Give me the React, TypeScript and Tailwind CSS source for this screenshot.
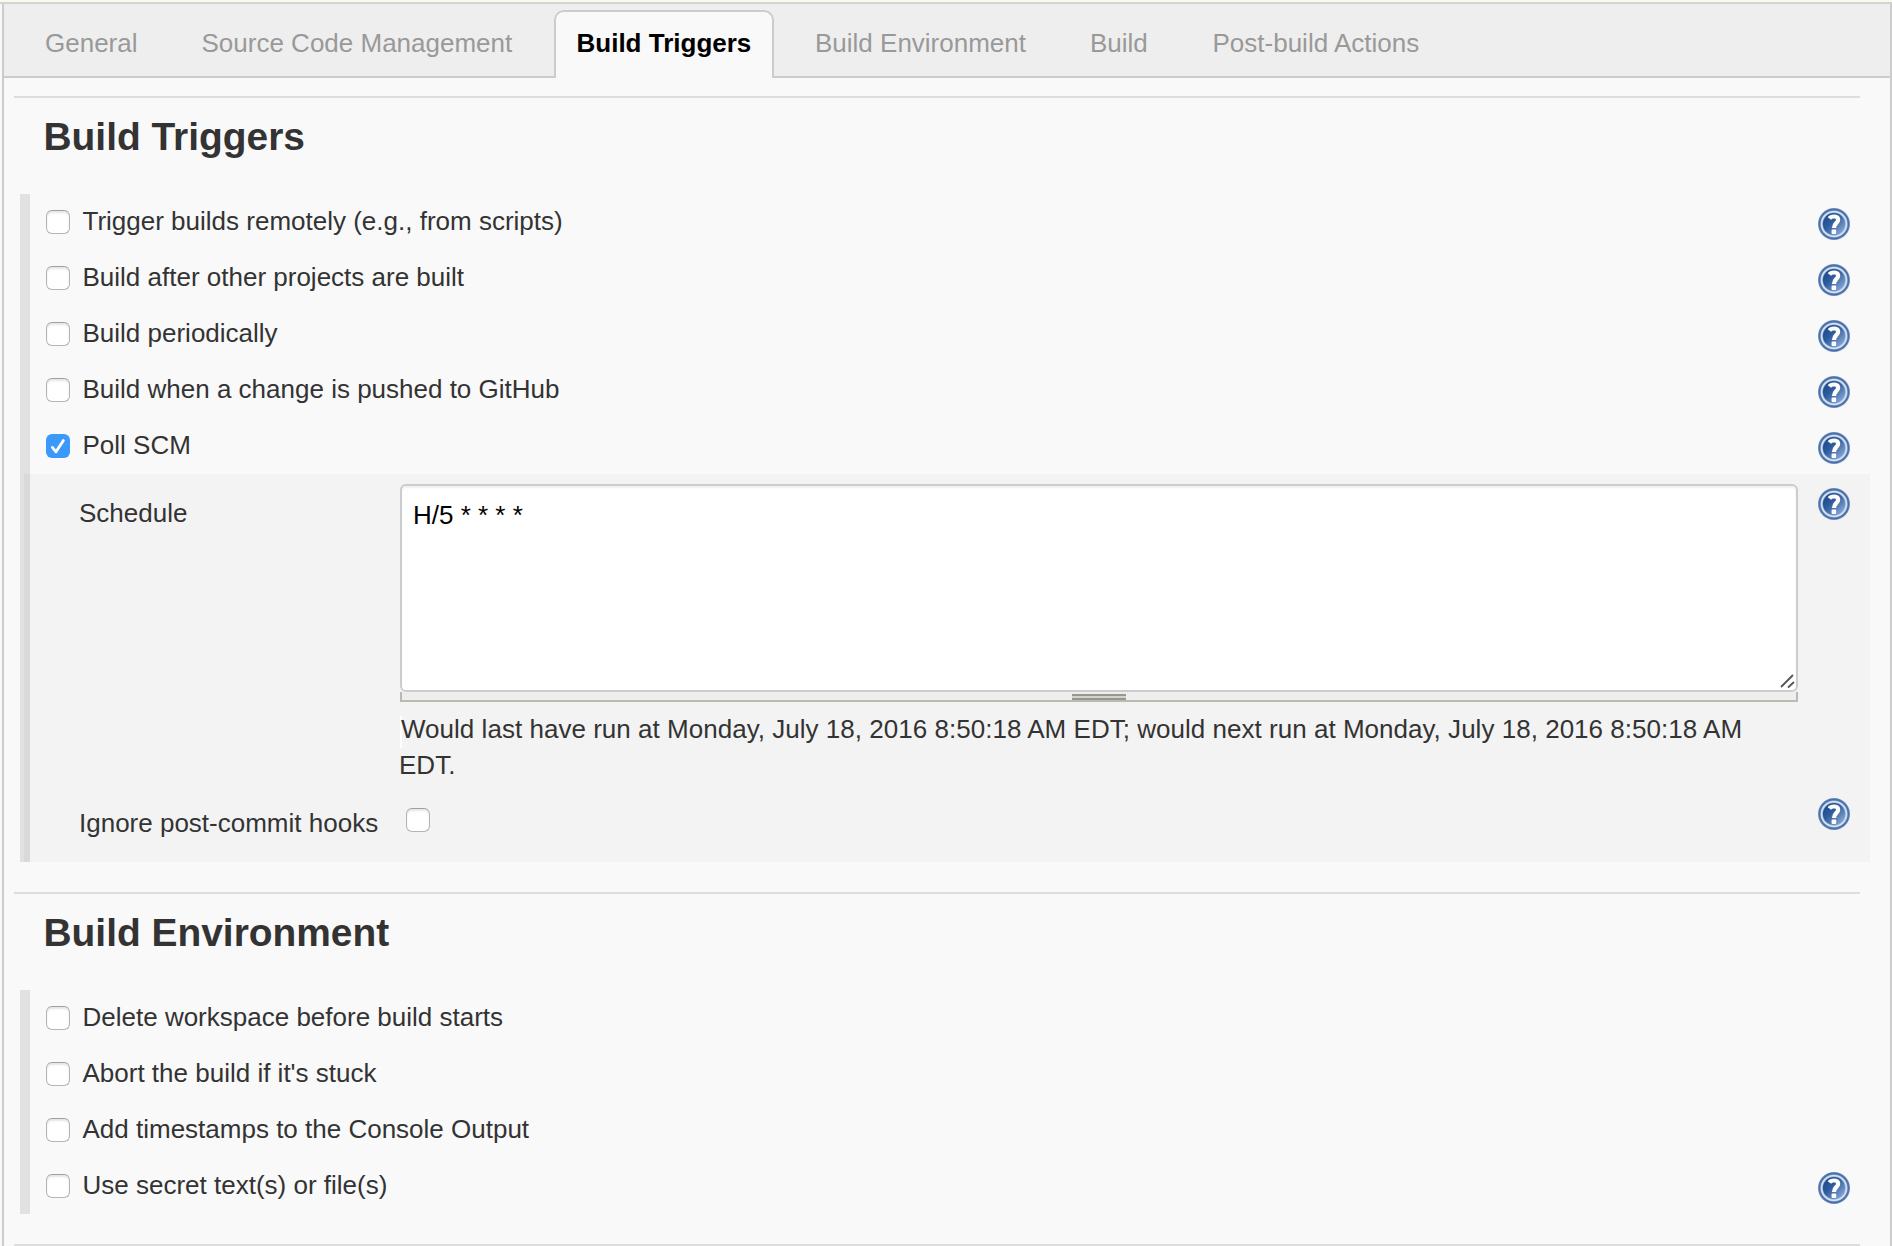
import React from "react";

const tabs = [
  { label: "General", pad: "ml-[41px] w-[93px]" },
  { label: "Source Code Management", pad: "ml-[63.5px] w-[311.5px]" },
  { label: "Build Triggers", active: true, pad: "" },
  { label: "Build Environment", pad: "ml-[41px] w-[212px]" },
  { label: "Build", pad: "ml-[63px] w-[60px]" },
  { label: "Post-build Actions", pad: "ml-[62.5px] w-[210px]" },
];

function Help() {
  return (
    <svg className="block size-8 shrink-0" viewBox="0 0 32 32" role="img" aria-label="Help">
      <defs>
        <linearGradient id="helpFill" x1="0.1" y1="0.1" x2="0.9" y2="0.9">
          <stop offset="0" stopColor="#1c4a8c" />
          <stop offset="0.4" stopColor="#2f5c9c" />
          <stop offset="1" stopColor="#86a9d6" />
        </linearGradient>
      </defs>
      <circle cx="16" cy="16" r="16" fill="#6f90c0" />
      <circle cx="16" cy="16" r="15.2" fill="#4a71ac" />
      <circle cx="16" cy="16" r="13.6" fill="#a9bfdd" />
      <circle cx="16" cy="16" r="13" fill="#dbe5f2" />
      <circle cx="16" cy="16" r="11.8" fill="#9db5d8" />
      <circle cx="16" cy="16" r="11.1" fill="url(#helpFill)" />
      <path d="M11.4 10.4C13.2 7.9 20.2 7.4 20.2 11.8C20.2 15 16 15 16 20" fill="none" stroke="#fff" strokeWidth="4.2" />
      <rect x="13.6" y="21.6" width="4.6" height="4.4" rx="1" fill="#fff" />
    </svg>
  );
}

function Check({ checked = false }: { checked?: boolean }) {
  if (checked) {
    return (
      <span className="block size-6 shrink-0 rounded-[6px] bg-[#3b99fc]">
        <svg viewBox="0 0 24 24" className="block size-6">
          <path d="M6.4 13.4L10 17.8L17.4 6.6" fill="none" stroke="#fff" strokeWidth="2.8" strokeLinecap="round" strokeLinejoin="round" />
        </svg>
      </span>
    );
  }
  return (
    <span className="block size-6 shrink-0 rounded-[6px] border border-[#b4b4b4] border-t-[#a0a0a0] bg-white shadow-[inset_0_2px_2px_rgba(0,0,0,0.1)]" />
  );
}

function Row({ label, checked, help }: { label: string; checked?: boolean; help?: boolean }) {
  return (
    <div className="flex h-14 items-start pt-[14px] pl-4">
      <div className="mt-[2px]">
        <Check checked={checked} />
      </div>
      <span className="-mt-[2px] ml-[12.5px] leading-[30px] whitespace-nowrap">{label}</span>
      {help && (
        <div className="mr-[20px] ml-auto">
          <Help />
        </div>
      )}
    </div>
  );
}

function Heading({ children }: { children: React.ReactNode }) {
  return (
    <div className="mr-[30px] ml-[10px] h-[98px] border-t-2 border-[#ddd]">
      <h2 className="ml-[29.5px] pt-[16px] text-[38.9px] leading-[46px] font-bold">{children}</h2>
    </div>
  );
}

export default function App() {
  return (
    <div className="flex h-[1246px] w-[1892px] flex-col overflow-hidden bg-[#f9f9f9] font-['Liberation_Sans',Arial,sans-serif] text-[26px] text-[#333]">
      <div className="h-1 shrink-0 border-b-2 border-[#d3d5cf] bg-[#f6faef]" />
      <div className="ml-[2px] flex grow flex-col border-x-2 border-[#ccc]">
        <nav className="flex h-[74px] shrink-0 items-end border-b-2 border-[#ccc] bg-[#eee] text-[#999]">
          {tabs.map((t) =>
            t.active ? (
              <div
                key={t.label}
                className="relative -mb-[2px] ml-[41px] h-[68px] w-[220px] rounded-t-[10px] border-2 border-b-0 border-[#ccc] bg-[#f9f9f9] pl-[20.5px] leading-[62px] font-bold whitespace-nowrap text-black"
              >
                {t.label}
              </div>
            ) : (
              <div key={t.label} className={"h-[66px] leading-[66px] whitespace-nowrap " + t.pad}>
                {t.label}
              </div>
            ),
          )}
        </nav>

        <main className="pt-[18px]">
          <Heading>Build Triggers</Heading>
          <section className="mr-[20px] ml-4">
            <div className="border-l-[10px] border-[#e1e1e1]">
              <Row label="Trigger builds remotely (e.g., from scripts)" help />
              <Row label="Build after other projects are built" help />
              <Row label="Build periodically" help />
              <Row label="Build when a change is pushed to GitHub" help />
              <Row label="Poll SCM" checked help />
            </div>
            <div className="border-l-4 border-[#e1e1e1]">
              <div className="h-[388px] border-l-[6px] border-[#d9d9d9] bg-[#f3f3f3] pt-[10px]">
                <div className="flex h-[324px] items-start">
                  <span className="ml-[49px] w-[321px] pt-[14px] leading-[30px]">Schedule</span>
                  <div className="w-[1398px]">
                    <div className="relative h-[208px] rounded-[6px] border-2 border-[#ccc] bg-white pt-[14px] pl-[11px] leading-[30px] text-black shadow-[inset_0_2px_2px_rgba(0,0,0,0.06)]">
                      H/5 * * * *
                      <svg className="absolute right-0 bottom-0 size-4" viewBox="0 0 16 16">
                        <path d="M1 13L13 1M8 13.5L14 8" stroke="#555" strokeWidth="1.8" fill="none" />
                      </svg>
                    </div>
                    <div className="flex h-[10px] justify-center border-x-2 border-b-2 border-[#b9bab2] bg-[#eee] pt-[2px]">
                      <div className="h-[6px] w-[54px] border-y-2 border-[#969890] bg-[#d3d4cd]" />
                    </div>
                    <div className="mt-[9px] -ml-px leading-9 tracking-[0.025px] whitespace-nowrap">
                      <div className="flex h-9">
                        <span className="mt-[5px] ml-px h-8 w-[2px] bg-white" />
                        <span className="-ml-px">
                          Would last have run at Monday, July 18, 2016 8:50:18 AM EDT; would next run at Monday, July 18, 2016 8:50:18 AM
                        </span>
                      </div>
                      EDT.
                    </div>
                  </div>
                  <div className="mt-1 ml-5">
                    <Help />
                  </div>
                </div>
                <div className="flex items-start">
                  <span className="ml-[49px] w-[327px] leading-[30px]">Ignore post-commit hooks</span>
                  <Check />
                  <div className="-mt-[10px] mr-[20px] ml-auto">
                    <Help />
                  </div>
                </div>
              </div>
            </div>
          </section>
          <div className="h-[30px]" />
          <Heading>Build Environment</Heading>
          <section className="mr-[20px] ml-4 border-l-[10px] border-[#e1e1e1]">
            <Row label="Delete workspace before build starts" />
            <Row label="Abort the build if it's stuck" />
            <Row label="Add timestamps to the Console Output" />
            <Row label="Use secret text(s) or file(s)" help />
          </section>
          <div className="mt-[30px] mr-[30px] ml-[10px] h-[2px] bg-[#ddd]" />
        </main>
      </div>
    </div>
  );
}
